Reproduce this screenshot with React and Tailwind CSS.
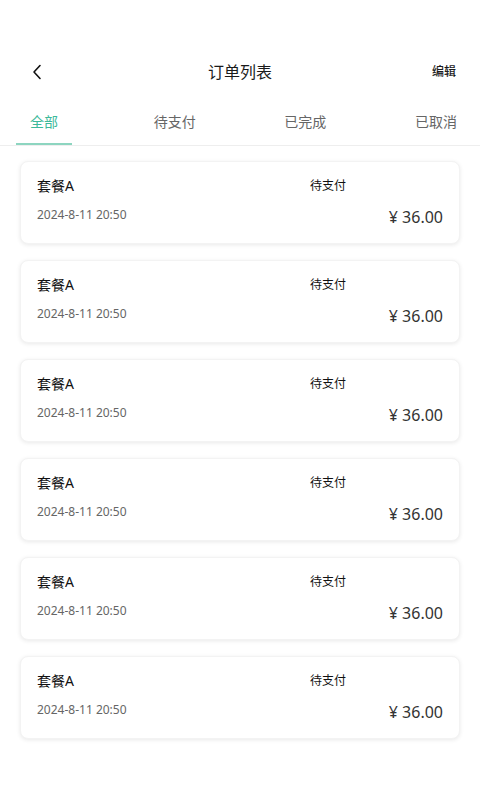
import React from "react";

const font = { fontFamily: '"Noto Sans", "Noto Sans CJK SC", sans-serif' };

function Card() {
  return (
    <div className="mx-5 rounded-lg bg-white px-4 pt-[14px] pb-[14px] shadow-[0_1px_4px_rgba(0,0,0,0.09)] border border-[#f3f3f3]">
      <div className="flex">
        <div className="flex-1">
          <div className="text-[14px] leading-5 text-[#111]">套餐A</div>
          <div className="mt-[11px] text-[12px] leading-4 text-[#666]">2024-8-11 20:50</div>
        </div>
        <div className="w-[133px] flex flex-col">
          <div className="text-[12px] leading-5 text-[#111]">待支付</div>
          <div className="mt-[9px] text-right text-[16px] leading-6 text-[#333]">¥ 36.00</div>
        </div>
      </div>
    </div>
  );
}

export default function App() {
  const tabs = ["全部", "待支付", "已完成", "已取消"];
  return (
    <div className="min-h-[800px] bg-white" style={font}>
      <div className="pt-12">
        <div className="h-12 flex items-center px-8 relative">
          <svg width="10" height="16" viewBox="0 0 10 16">
            <path d="M8 1.5 L2 8 L8 14.5" fill="none" stroke="#111" strokeWidth="1.6" strokeLinecap="round" strokeLinejoin="round" />
          </svg>
          <div className="absolute left-1/2 -translate-x-1/2 text-[16px] text-[#1a1a1a]">订单列表</div>
          <div className="ml-auto -mr-2 text-[12px] font-medium text-[#1a1a1a]">编辑</div>
        </div>
        <div className="h-[50px] px-4 flex justify-between border-b border-[#eeeeee]">
          {tabs.map((t, i) => (
            <div key={t} className="w-14 flex flex-col items-center pt-4">
              <div className={"text-[14px] leading-5 " + (i === 0 ? "text-[#3cb99a]" : "text-[#666]")}>{t}</div>
              <div className={"mt-auto h-[2px] w-full " + (i === 0 ? "bg-[#8dd5c0]" : "bg-transparent")} />
            </div>
          ))}
        </div>
      </div>
      <div className="mt-[15px] flex flex-col gap-4">
        {Array.from({ length: 6 }).map((_, i) => (
          <Card key={i} />
        ))}
      </div>
    </div>
  );
}
